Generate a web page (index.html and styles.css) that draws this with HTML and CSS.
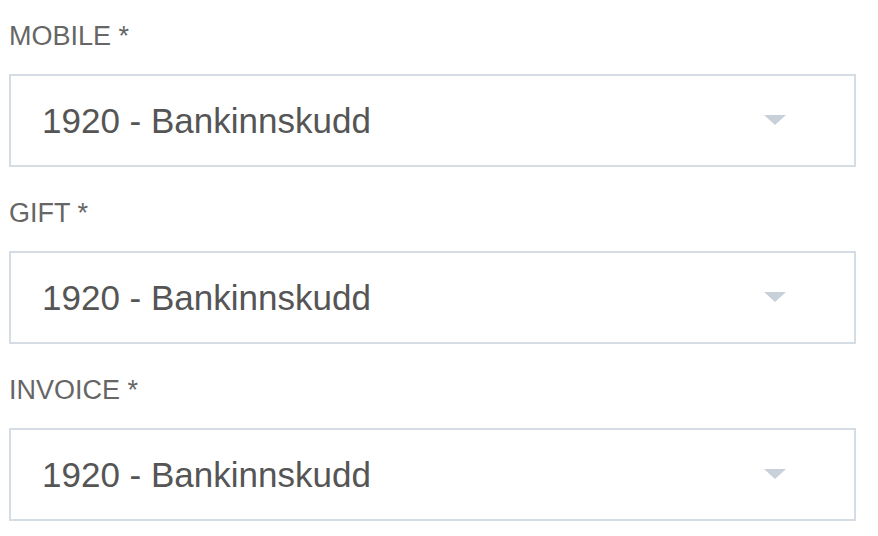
FILE: index.html
```html
<!DOCTYPE html>
<html>
<head>
<meta charset="utf-8">
<link rel="stylesheet" href="styles.css">
</head>
<body>
<form class="form">
  <div class="field">
    <label class="label">MOBILE *</label>
    <div class="select">
      <span class="value">1920 - Bankinnskudd</span>
      <span class="arrow"></span>
    </div>
  </div>
  <div class="field">
    <label class="label">GIFT *</label>
    <div class="select">
      <span class="value">1920 - Bankinnskudd</span>
      <span class="arrow"></span>
    </div>
  </div>
  <div class="field">
    <label class="label">INVOICE *</label>
    <div class="select">
      <span class="value">1920 - Bankinnskudd</span>
      <span class="arrow"></span>
    </div>
  </div>
</form>
</body>
</html>
```
FILE: styles.css
```css
html, body {
  margin: 0;
  padding: 0;
  background: #ffffff;
}
body {
  font-family: "Liberation Sans", Arial, sans-serif;
}
.form {
  display: flex;
  flex-direction: column;
  gap: 31px;
  padding: 21px 22px 0 9px;
}
.field {
  display: flex;
  flex-direction: column;
  gap: 23px;
}
.label {
  font-size: 27px;
  line-height: 30px;
  color: #666666;
}
.select {
  box-sizing: border-box;
  width: 847px;
  height: 93px;
  border: 2px solid #d5dce3;
  display: flex;
  align-items: center;
  justify-content: space-between;
  padding: 0 68px 0 31px;
}
.value {
  font-size: 35px;
  color: #555555;
  line-height: 40px;
}
.arrow {
  width: 0;
  height: 0;
  border-left: 11px solid transparent;
  border-right: 11px solid transparent;
  border-top: 10px solid #c8d0d9;
  margin-top: -2px;
}
```
